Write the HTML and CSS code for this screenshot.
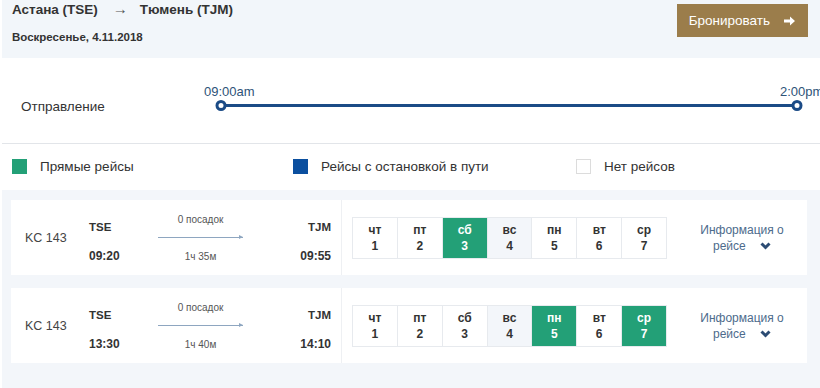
FILE: index.html
```html
<!DOCTYPE html>
<html lang="ru">
<head>
    <meta charset="UTF-8">
    <meta name="viewport" content="width=device-width, initial-scale=1.0">
    <title>Астана — Тюмень</title>
    <link rel="stylesheet" href="styles.css">
</head>
<body>
    <div class="page">
        <!-- Trip header -->
        <header class="trip-head">
            <div class="trip-title">
                <div class="route">Астана (TSE)<span class="route-arrow">→</span>Тюмень (TJM)</div>
                <div class="trip-date">Воскресенье, 4.11.2018</div>
            </div>
            <button class="book-btn">
                Бронировать
                <svg width="11" height="10" viewBox="0 0 11 10"><path d="M0 3.6h6V0.6L11 5 6 9.4V6.4H0z" fill="#fff"/></svg>
            </button>
        </header>

        <!-- Departure time filter -->
        <section class="departure">
            <div class="departure-label">Отправление</div>
            <div class="range">
                <div class="range-track"></div>
                <div class="range-handle" style="left: 0%"><span class="range-value">09:00am</span></div>
                <div class="range-handle" style="left: 100%"><span class="range-value">2:00pm</span></div>
            </div>
        </section>

        <!-- Legend -->
        <div class="legend">
            <div class="legend-item"><span class="swatch direct"></span>Прямые рейсы</div>
            <div class="legend-item"><span class="swatch with-stops"></span>Рейсы с остановкой в пути</div>
            <div class="legend-item"><span class="swatch none"></span>Нет рейсов</div>
        </div>

        <!-- Flights -->
        <section class="flights">
            <div class="flight-card">
                <div class="flight-no">KC 143</div>
                <div class="flight-route">
                    <div class="point">
                        <div class="code">TSE</div>
                        <div class="time">09:20</div>
                    </div>
                    <div class="leg">
                        <div class="stops">0 посадок</div>
                        <div class="leg-line"></div>
                        <div class="duration">1ч 35м</div>
                    </div>
                    <div class="point right">
                        <div class="code">TJM</div>
                        <div class="time">09:55</div>
                    </div>
                </div>
                <div class="days">
                    <div class="days-grid">
                        <div class="day">чт<br>1</div>
                        <div class="day">пт<br>2</div>
                        <div class="day active">сб<br>3</div>
                        <div class="day weekend">вс<br>4</div>
                        <div class="day">пн<br>5</div>
                        <div class="day">вт<br>6</div>
                        <div class="day">ср<br>7</div>
                    </div>
                </div>
                <div class="flight-info">
                    Информация о<br>рейсе
                    <svg class="chevron" width="11" height="8" viewBox="0 0 11 8"><path d="M1.5 1.5L5.5 5.5 9.5 1.5" fill="none" stroke="#2c4c74" stroke-width="3"/></svg>
                </div>
            </div>

            <div class="flight-card">
                <div class="flight-no">KC 143</div>
                <div class="flight-route">
                    <div class="point">
                        <div class="code">TSE</div>
                        <div class="time">13:30</div>
                    </div>
                    <div class="leg">
                        <div class="stops">0 посадок</div>
                        <div class="leg-line"></div>
                        <div class="duration">1ч 40м</div>
                    </div>
                    <div class="point right">
                        <div class="code">TJM</div>
                        <div class="time">14:10</div>
                    </div>
                </div>
                <div class="days">
                    <div class="days-grid">
                        <div class="day">чт<br>1</div>
                        <div class="day">пт<br>2</div>
                        <div class="day">сб<br>3</div>
                        <div class="day weekend">вс<br>4</div>
                        <div class="day active">пн<br>5</div>
                        <div class="day">вт<br>6</div>
                        <div class="day active">ср<br>7</div>
                    </div>
                </div>
                <div class="flight-info">
                    Информация о<br>рейсе
                    <svg class="chevron" width="11" height="8" viewBox="0 0 11 8"><path d="M1.5 1.5L5.5 5.5 9.5 1.5" fill="none" stroke="#2c4c74" stroke-width="3"/></svg>
                </div>
            </div>
        </section>
    </div>
</body>
</html>
```

FILE: styles.css
```css
body {
    margin: 0;
    font-family: "Liberation Sans", Arial, sans-serif;
    color: #333;
    background: #fff;
    overflow: hidden;
}

.page {
    margin-left: 2px;
}

/* Header */
.trip-head {
    display: flex;
    justify-content: space-between;
    align-items: flex-start;
    height: 58px;
    box-sizing: border-box;
    padding: 0 12px 0 10px;
    background: #f2f6fa;
}

.route {
    margin-top: 1px;
    font-size: 13.5px;
    font-weight: bold;
    line-height: 16px;
}

.route-arrow {
    margin: 0 12px 0 15px;
    font-weight: normal;
    font-size: 15px;
    color: #555;
}

.trip-date {
    margin-top: 12px;
    font-size: 11.5px;
    font-weight: bold;
    line-height: 14px;
}

.book-btn {
    display: flex;
    align-items: center;
    gap: 14px;
    margin-top: 4px;
    height: 33px;
    padding: 0 13px 0 12px;
    border: none;
    background: #9b7d4b;
    color: #fff;
    font-family: inherit;
    font-size: 13.5px;
    cursor: pointer;
}

/* Departure slider */
.departure {
    display: flex;
    align-items: flex-start;
    height: 86px;
    box-sizing: border-box;
    padding: 40px 0 0 19px;
    border-bottom: 1px solid #e2e5e9;
}

.departure-label {
    width: 200px;
    margin-top: 1px;
    font-size: 13.5px;
    line-height: 16px;
}

.range {
    position: relative;
    width: 576px;
    height: 14px;
}

.range-track {
    margin-top: 6px;
    height: 3px;
    background: #1b4b86;
}

.range-handle {
    position: absolute;
    top: 1.5px;
    width: 11px;
    height: 11px;
    box-sizing: border-box;
    border: 3px solid #1b4b86;
    border-radius: 50%;
    background: #fff;
    transform: translateX(-50%);
}

.range-value {
    position: absolute;
    top: -18px;
    left: -14.5px;
    font-size: 13px;
    line-height: 14px;
    color: #2e5378;
    white-space: nowrap;
}

/* Legend */
.legend {
    display: grid;
    grid-template-columns: 281px 283px auto;
    padding: 15px 0 16px 10px;
    font-size: 13.5px;
    line-height: 15px;
}

.legend-item {
    display: flex;
    align-items: center;
    gap: 13px;
}

.swatch {
    width: 15px;
    height: 15px;
    box-sizing: border-box;
}

.direct {
    background: #23a077;
}

.with-stops {
    background: #0b4f9f;
}

.none {
    border: 1px solid #dcdcdc;
    background: #fff;
}

/* Flights */
.flights {
    display: flex;
    flex-direction: column;
    gap: 13px;
    padding: 10px 13px 30px 9px;
    background: #f3f6fa;
}

.flight-card {
    display: flex;
    align-items: center;
    height: 75px;
    padding-left: 14px;
    background: #fff;
}

.flight-no {
    width: 64px;
    font-size: 12.5px;
    color: #444;
}

.flight-route {
    display: grid;
    grid-template-columns: 69px 85px 88px;
    align-self: stretch;
}

.point {
    padding-top: 19px;
    font-weight: bold;
}

.point.right {
    text-align: right;
}

.code {
    font-size: 11.5px;
    line-height: 16px;
}

.time {
    margin-top: 13px;
    font-size: 12px;
    line-height: 16px;
}

.leg {
    display: flex;
    flex-direction: column;
    align-items: center;
    padding-top: 13px;
}

.stops,
.duration {
    font-size: 10px;
    line-height: 14px;
    color: #555;
}

.leg-line {
    position: relative;
    width: 85px;
    height: 1px;
    margin: 10px 0 12px;
    background: #8ea6c0;
}

.leg-line::after {
    content: "";
    position: absolute;
    right: 0;
    top: -2px;
    border-left: 4px solid #8ea6c0;
    border-top: 2.5px solid transparent;
    border-bottom: 2.5px solid transparent;
}

.days {
    display: flex;
    align-items: center;
    align-self: stretch;
    margin-left: 10px;
    padding: 0 10px;
    border-left: 1px solid #eef0f3;
}

.days-grid {
    display: grid;
    grid-template-columns: repeat(7, 1fr);
    gap: 1px;
    width: 313px;
    border: 1px solid #e7eaee;
    background: #e7eaee;
}

.day {
    padding: 4px 0;
    background: #fff;
    text-align: center;
    font-size: 12px;
    font-weight: bold;
    line-height: 16px;
    color: #333;
}

.day.weekend {
    background: #f3f6fa;
}

.day.active {
    background: #23a077;
    color: #fff;
}

.flight-info {
    flex: 1;
    text-align: center;
    font-size: 12px;
    line-height: 16px;
    color: #4d6b8c;
}

.chevron {
    margin-left: 11px;
    vertical-align: 0;
}
```
